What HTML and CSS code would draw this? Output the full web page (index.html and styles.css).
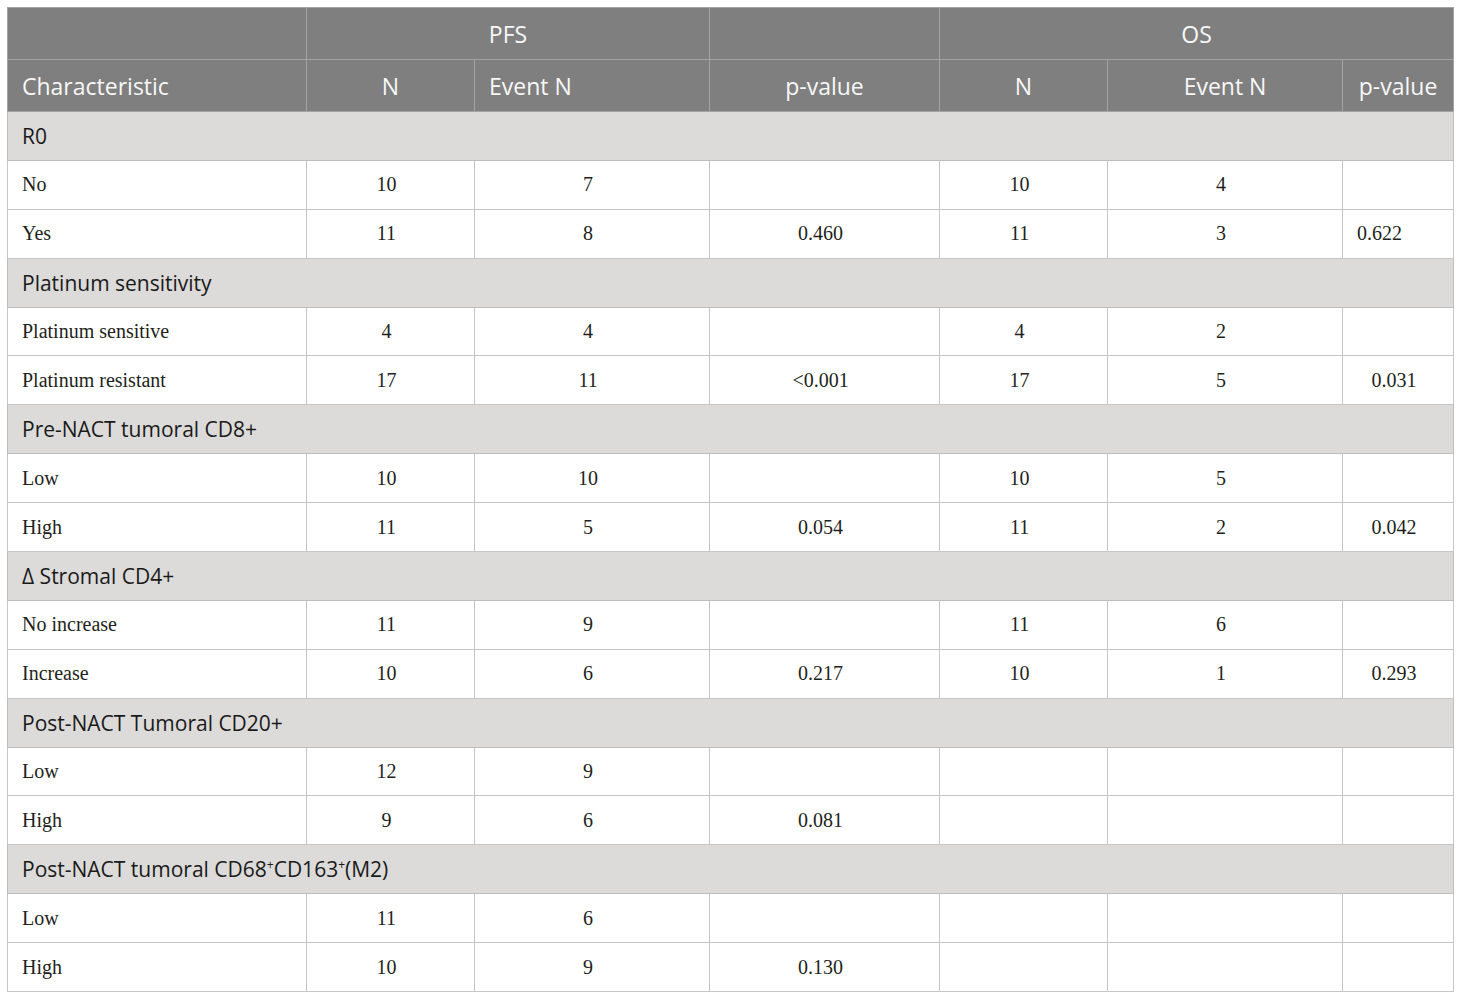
FILE: index.html
```html
<!DOCTYPE html>
<html lang="en">
<head>
<meta charset="utf-8">
<title>Table</title>
<link rel="stylesheet" href="styles.css">
</head>
<body>
<table class="tbl">
  <colgroup>
    <col class="c1"><col class="c2"><col class="c3"><col class="c4"><col class="c5"><col class="c6"><col class="c7">
  </colgroup>
  <thead>
    <tr class="h1">
      <th></th>
      <th colspan="2">PFS</th>
      <th></th>
      <th colspan="3">OS</th>
    </tr>
    <tr class="h2">
      <th class="left">Characteristic</th>
      <th>N</th>
      <th class="left">Event N</th>
      <th>p-value</th>
      <th>N</th>
      <th>Event N</th>
      <th>p-value</th>
    </tr>
  </thead>
  <tbody>
    <tr class="grp"><td colspan="7">R0</td></tr>
    <tr><td class="left">No</td><td>10</td><td>7</td><td></td><td>10</td><td>4</td><td></td></tr>
    <tr><td class="left">Yes</td><td>11</td><td>8</td><td>0.460</td><td>11</td><td>3</td><td class="left">0.622</td></tr>
    <tr class="grp"><td colspan="7">Platinum sensitivity</td></tr>
    <tr><td class="left">Platinum sensitive</td><td>4</td><td>4</td><td></td><td>4</td><td>2</td><td></td></tr>
    <tr><td class="left">Platinum resistant</td><td>17</td><td>11</td><td>&lt;0.001</td><td>17</td><td>5</td><td>0.031</td></tr>
    <tr class="grp"><td colspan="7">Pre-NACT tumoral CD8+</td></tr>
    <tr><td class="left">Low</td><td>10</td><td>10</td><td></td><td>10</td><td>5</td><td></td></tr>
    <tr><td class="left">High</td><td>11</td><td>5</td><td>0.054</td><td>11</td><td>2</td><td>0.042</td></tr>
    <tr class="grp"><td colspan="7">&Delta; Stromal CD4+</td></tr>
    <tr><td class="left">No increase</td><td>11</td><td>9</td><td></td><td>11</td><td>6</td><td></td></tr>
    <tr><td class="left">Increase</td><td>10</td><td>6</td><td>0.217</td><td>10</td><td>1</td><td>0.293</td></tr>
    <tr class="grp"><td colspan="7">Post-NACT Tumoral CD20+</td></tr>
    <tr><td class="left">Low</td><td>12</td><td>9</td><td></td><td></td><td></td><td></td></tr>
    <tr><td class="left">High</td><td>9</td><td>6</td><td>0.081</td><td></td><td></td><td></td></tr>
    <tr class="grp"><td colspan="7">Post-NACT tumoral CD68<sup>+</sup>CD163<sup>+</sup>(M2)</td></tr>
    <tr><td class="left">Low</td><td>11</td><td>6</td><td></td><td></td><td></td><td></td></tr>
    <tr><td class="left">High</td><td>10</td><td>9</td><td>0.130</td><td></td><td></td><td></td></tr>
  </tbody>
</table>
</body>
</html>
```

FILE: styles.css
```css
html, body {
  margin: 0;
  padding: 0;
  background: #ffffff;
}

body {
  padding: 7px 0 0 7px;
}

.tbl {
  border-collapse: collapse;
  table-layout: fixed;
  width: 1446px;
  border: 1px solid #bdbdbd;
}

.c1 { width: 299px; }
.c2 { width: 168px; }
.c3 { width: 235px; }
.c4 { width: 230px; }
.c5 { width: 168px; }
.c6 { width: 235px; }
.c7 { width: 111px; }

.tbl th {
  background: #7f7f7f;
  color: #f7f7f7;
  font-family: "Open Sans", "Liberation Sans", sans-serif;
  font-weight: 400;
  font-size: 23px;
  height: 52px;
  padding: 0 8px 0 8px;
  border: 1px solid #a3a3a3;
  text-align: center;
  vertical-align: middle;
  box-sizing: border-box;
}

.tbl .h2 th {
  padding-top: 1px;
}

.tbl .h2 th.left {
  text-align: left;
  padding-left: 14px;
}

.tbl td {
  font-family: "Liberation Serif", "Times New Roman", serif;
  font-size: 20px;
  color: #231f20;
  height: 48.9px;
  padding: 0 16px 0 8px;
  border: 1px solid #c6c6c6;
  text-align: center;
  vertical-align: middle;
  box-sizing: border-box;
}

.tbl td.left {
  text-align: left;
  padding-left: 14px;
}

.tbl .grp td {
  background: #dcdbd9;
  font-family: "Open Sans", "Liberation Sans", sans-serif;
  font-size: 21px;
  color: #1a1a1a;
  text-align: left;
  padding-left: 14px;
  border-color: #bdbdbd;
}

.tbl sup {
  font-size: 12px;
  line-height: 0;
  vertical-align: 8px;
}
```
